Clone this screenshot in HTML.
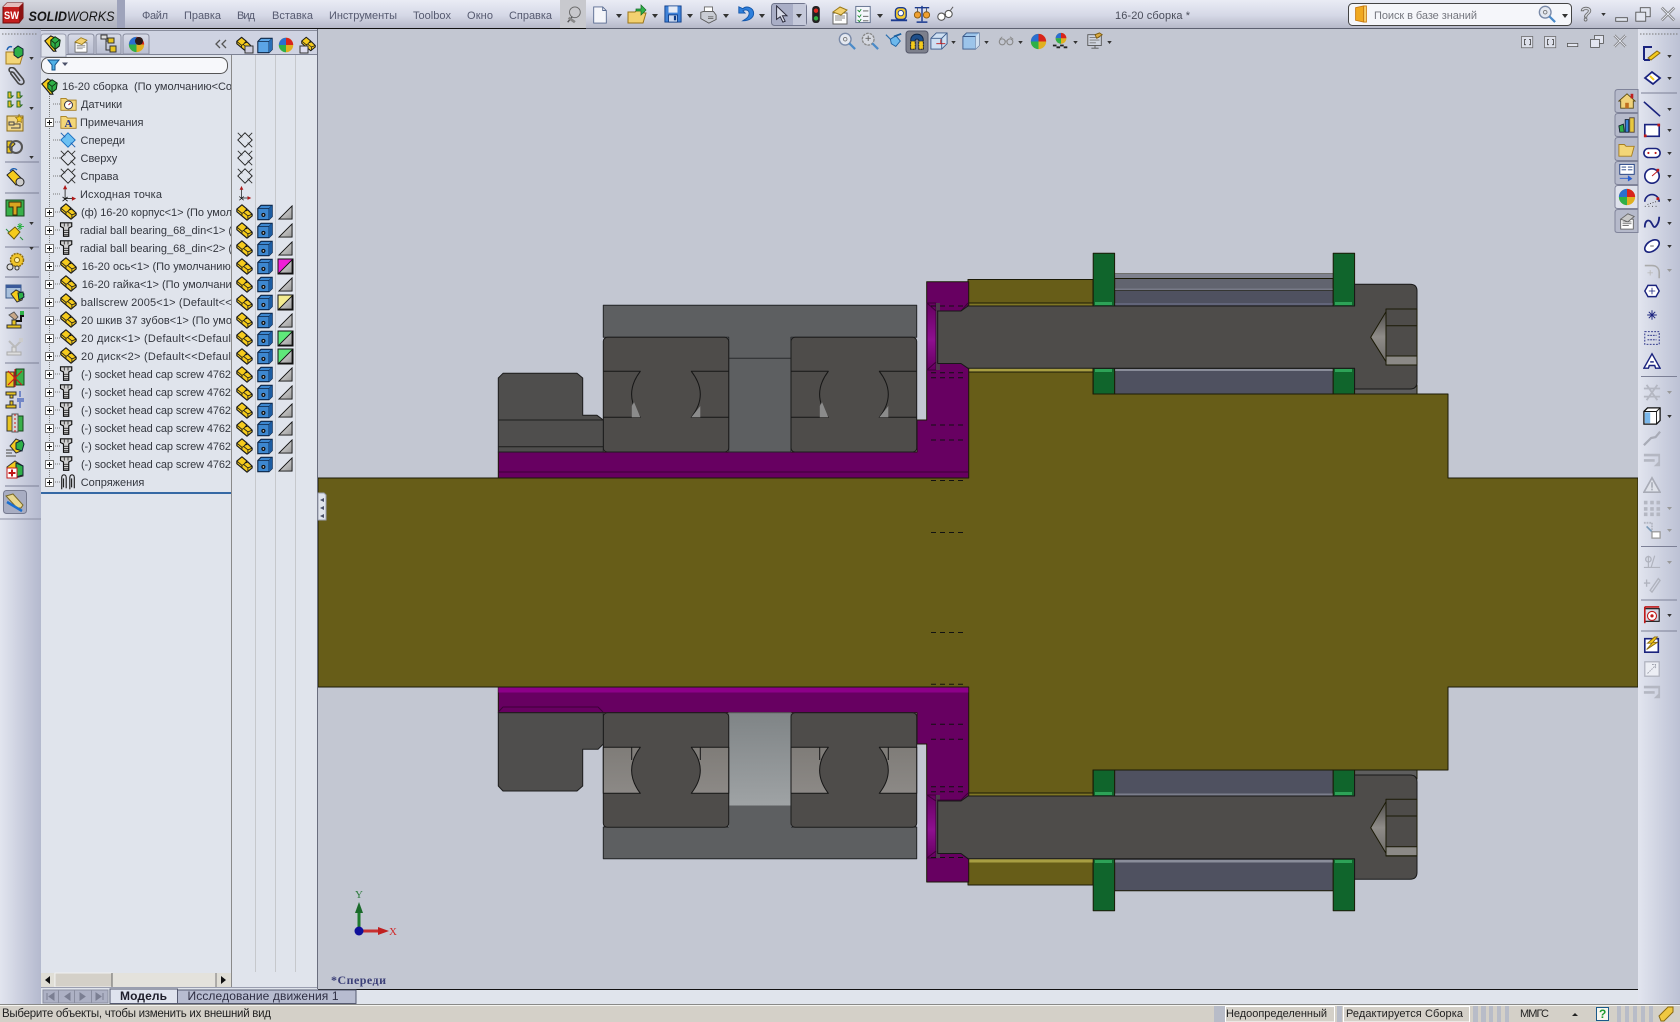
<!DOCTYPE html>
<html><head><meta charset="utf-8"><title>SOLIDWORKS</title>
<style>
html,body{margin:0;padding:0;background:#c3c7d2;width:1680px;height:1022px;overflow:hidden}
svg{display:block;position:absolute;left:0;top:0}
text{font-family:"Liberation Sans","Noto Sans CJK SC",sans-serif;font-size:11px;fill:#34373f}
.m{fill:#565a70}
.t{font-size:11px}
</style></head><body>
<svg width="1680" height="1022" viewBox="0 0 1680 1022" xmlns="http://www.w3.org/2000/svg">
<defs>
<linearGradient id="gTop" x1="0" y1="0" x2="0" y2="1"><stop offset="0" stop-color="#eaecf5"/><stop offset=".55" stop-color="#d5d8e6"/><stop offset="1" stop-color="#b6b9c9"/></linearGradient>
<linearGradient id="gLogo" x1="0" y1="0" x2="0" y2="1"><stop offset="0" stop-color="#d5d7df"/><stop offset="1" stop-color="#aeb1bd"/></linearGradient>
<linearGradient id="gL" x1="0" y1="0" x2="1" y2="0"><stop offset="0" stop-color="#e2e5ef"/><stop offset="1" stop-color="#b4b9ce"/></linearGradient>
<linearGradient id="gR" x1="0" y1="0" x2="1" y2="0"><stop offset="0" stop-color="#e2e5ef"/><stop offset="1" stop-color="#bcc1d4"/></linearGradient>
<linearGradient id="gSide" x1="0" y1="0" x2="0" y2="1"><stop offset="0" stop-color="#7f7c78"/><stop offset="1" stop-color="#8c8986"/></linearGradient>
<linearGradient id="gGap" x1="0" y1="0" x2="0" y2="1"><stop offset="0" stop-color="#7f8486"/><stop offset="1" stop-color="#9fa3a5"/></linearGradient>
<linearGradient id="gCone" x1="0" y1="0" x2="0" y2="1"><stop offset="0" stop-color="#4e4c4a"/><stop offset=".5" stop-color="#8f8c88"/><stop offset="1" stop-color="#6f6d6a"/></linearGradient>
<linearGradient id="gPur" x1="0" y1="0" x2="0" y2="1"><stop offset="0" stop-color="#660060"/><stop offset=".55" stop-color="#8e1090"/><stop offset="1" stop-color="#660060"/></linearGradient>
<linearGradient id="gTri" x1="0" y1="0" x2="1" y2="1"><stop offset="0" stop-color="#e8e8e8"/><stop offset="1" stop-color="#9a9a9a"/></linearGradient>
<linearGradient id="gTab" x1="0" y1="0" x2="0" y2="1"><stop offset="0" stop-color="#d8dbe8"/><stop offset="1" stop-color="#b9bed1"/></linearGradient>
<clipPath id="cTree"><rect x="41" y="76" width="190" height="420"/></clipPath>

<symbol id="dd" viewBox="0 0 6 4"><path d="M0 0h6L3 4z" fill="#333"/></symbol>
<symbol id="part" viewBox="0 0 20 20"><path d="M1 6 7 1l6 5-2 2 3-1 5 5v2l-6 5L1 9z" fill="#f5cb1c" stroke="#1c1c1c" stroke-width="1.400" stroke-linejoin="round"/><path d="M1 6l6 5 2-1M7 11v3l6 5M13 6 9 10l5 4 5-2M14 14v4" fill="none" stroke="#1c1c1c"/></symbol>
<symbol id="screw" viewBox="0 0 20 20"><path d="M2 1h15v5l-4 2v11H6V8L2 6z" fill="#cfcfcf" stroke="#111" stroke-width="1.500"/><path d="M6 11h7M6 14h7M6 17h7M7 2v4M12 2v4" stroke="#111"/></symbol>
<symbol id="cube" viewBox="0 0 20 20"><path d="M1 5 5 1h14v14l-4 4H1z" fill="#3d87cf" stroke="#0c2444" stroke-width="1.400"/><path d="M1 5h14v14M15 5l4-4" fill="none" stroke="#0c2444"/><path d="M15 5l4-4v14l-4 4z" fill="#1c5da3"/><circle cx="8" cy="13" r="2.600" fill="#111"/><circle cx="8" cy="13" r="1" fill="#ddd"/></symbol>
<symbol id="cubeH" viewBox="0 0 20 20"><path d="M1 5 5 1h14v14l-4 4H1z" fill="#5ba5e6" stroke="#0c2444" stroke-width="1.300"/><path d="M1 5h14v14M15 5l4-4" fill="none" stroke="#0c2444"/><path d="M15 5l4-4v14l-4 4z" fill="#2a6fb6"/></symbol>
<symbol id="tri" viewBox="0 0 16 16"><path d="M1 15 15 1v14z" fill="url(#gTri)" stroke="#111"/></symbol>
<symbol id="plane" viewBox="0 0 20 20"><path d="M10 2 18 10 10 18 2 10z" fill="none" stroke="#222"/><path d="M2 2 7 7M13 13l5 5M18 2l-4 4" stroke="#333"/></symbol>
<symbol id="planeB" viewBox="0 0 20 20"><path d="M10 2 18 10 10 18 2 10z" fill="#6cc0f2" stroke="#1a6fc0"/><path d="M2 2 7 7M13 13l5 5" stroke="#1a5fb0"/></symbol>
<symbol id="orig" viewBox="0 0 20 20"><path d="M6 1v15h11" fill="none" stroke="#222"/><path d="M6 0 3.500 5h5zM19 16l-5-2.500v5z" fill="#b01818"/><path d="M3 14l6 5M9 14l-6 5" stroke="#111"/></symbol>
<symbol id="folder" viewBox="0 0 20 20"><path d="M1 4h6l2 2h10v12H1z" fill="#f3d678" stroke="#a57d20"/></symbol>
<symbol id="mates" viewBox="0 0 20 20"><path d="M3 18V5c0-4 5-4 5 0v12M5 16V6M12 18V5c0-4 5-4 5 0v12M14 16V6" fill="none" stroke="#222" stroke-width="1.300"/></symbol>
<symbol id="box" viewBox="0 0 9 9"><rect x=".5" y=".5" width="8" height="8" fill="#fff" stroke="#777"/><path d="M2 4.500h5M4.500 2v5" stroke="#111"/></symbol>
<symbol id="asm" viewBox="0 0 20 20"><path d="M1 7 8 1l4 2-2 8 4 8-3 0z" fill="#f5cb1c" stroke="#1c1c1c" stroke-width="1.300"/><path d="M8 6 13 2l6 4-1 7-5 4-5-5z" fill="#2eb048" stroke="#0f2d10" stroke-width="1.200"/><path d="M8 6l5 4 5-4M13 10v7" stroke="#0f2d10" fill="none"/></symbol>
<symbol id="ball" viewBox="0 0 20 20"><circle cx="10" cy="10" r="9" fill="#e0b020"/><path d="M10 1a9 9 0 0 0-9 9h9z" fill="#2a6fd0"/><path d="M10 1a9 9 0 0 1 9 9h-9z" fill="#d8241c"/><path d="M1 10a9 9 0 0 0 9 9V10z" fill="#2eb048"/></symbol>
<symbol id="aopen" viewBox="0 0 20 20"><path d="M1 7h7l2 2h8l-3 10H1z" fill="#f3d678" stroke="#a57d20"/><path d="M9 4l4-3 5 3v6l-5 3-4-3z" fill="#2eb048" stroke="#123"/><path d="M2 5c1-3 3-4 5-3" stroke="#1a5fb0" fill="none" stroke-width="1.400"/></symbol>
<symbol id="clip" viewBox="0 0 20 20"><path d="M5 5c-3-4 2-6 5-3l8 10c3 5-2 7-5 4L6 7c-1-2 1-3 3-1l6 8" fill="none" stroke="#444" stroke-width="1.600"/></symbol>
<symbol id="patt" viewBox="0 0 20 20"><path d="M3 2h3v4h2L6 8H3zM3 11h3v4h2l-2 2H3zM12 2h3v4h2l-2 2h-3zM12 11h3v4h2l-2 2h-3z" fill="#e8c420" stroke="#286a28"/></symbol>
<symbol id="fstar" viewBox="0 0 20 20"><rect x="2" y="3" width="16" height="15" fill="#efd58a" stroke="#8a6a18"/><path d="M4 9h5v3H4zM9 11h6v4H6" fill="none" stroke="#444"/><path d="M14 1l1 3 3 .5-2 2 .5 3-2.500-1.500L12 9.500l.5-3-2-2 3-.5z" fill="#f5cb1c" stroke="#8a6a18" stroke-width=".6"/></symbol>
<symbol id="rot" viewBox="0 0 20 20"><path d="M2 4h5l3 3-3 3H2zM2 10h5v6H2z" fill="#e8c420" stroke="#333"/><circle cx="11" cy="10" r="6" fill="none" stroke="#555" stroke-width="2"/></symbol>
<symbol id="gparts" viewBox="0 0 20 20"><path d="M2 8l6-5 9 9-1 5-5 1z" fill="#f5cb1c" stroke="#222"/><circle cx="15" cy="15" r="4" fill="#ccc" stroke="#222"/><path d="M5 4c2-3 5-3 7-1" stroke="#1a5fb0" fill="none" stroke-width="1.300"/></symbol>
<symbol id="ham" viewBox="0 0 20 20"><rect x="1" y="2" width="18" height="16" fill="#39b04a" stroke="#17451c"/><path d="M4 4h12v5h-4v8H8V9H4z" fill="#d9a520" stroke="#3a2a08"/></symbol>
<symbol id="exp" viewBox="0 0 20 20"><path d="M3 11l7-6 5 5-6 7z" fill="#f5cb1c" stroke="#6a5a10"/><path d="M15 1v7M12 4.500h7M13 2l4 5M17 2l-4 5" stroke="#2eb048"/><path d="M1 7l3 3M15 15l3 3" stroke="#2e9040"/></symbol>
<symbol id="gears" viewBox="0 0 20 20"><circle cx="12" cy="9" r="6.500" fill="#f0c52a" stroke="#8a6a10" stroke-width="1.500" stroke-dasharray="2 1"/><circle cx="12" cy="9" r="2.500" fill="#fff3b0" stroke="#8a6a10"/><circle cx="5" cy="16" r="3" fill="#ddd" stroke="#333"/><circle cx="12" cy="17" r="2" fill="#ddd" stroke="#333"/></symbol>
<symbol id="win" viewBox="0 0 20 20"><rect x="1" y="2" width="15" height="13" fill="#a8c0dc" stroke="#3a5a8a"/><rect x="1" y="2" width="15" height="3" fill="#3a5a9a"/><path d="M6 11l5-4 8 4-2 6-5 2z" fill="#f5cb1c" stroke="#333"/><path d="M13 10l5-1 1 5-5 3z" fill="#2eb048" stroke="#123"/></symbol>
<symbol id="move" viewBox="0 0 20 20"><path d="M2 15h14v3H2zM7 10h4v5H7z" fill="#e8c420" stroke="#333"/><path d="M4 5l5-3 4 5-3 3z" fill="#c8a888" stroke="#555"/><path d="M11 11h5V6h3" fill="none" stroke="#111" stroke-width="2"/><rect x="15" y="1" width="4" height="4" fill="#2eb048"/></symbol>
<symbol id="moveG" viewBox="0 0 20 20"><path d="M2 15h14v3H2zM7 10h4v5H7z" fill="#ddd" stroke="#aaa"/><path d="M4 4l6 6 6-6" fill="none" stroke="#bbb" stroke-width="2"/><rect x="14" y="1" width="4" height="4" fill="#ccc"/></symbol>
<symbol id="interf" viewBox="0 0 20 20"><rect x="1" y="4" width="8" height="15" fill="#e8c420" stroke="#333"/><rect x="11" y="1" width="8" height="16" fill="#39b04a" stroke="#17451c"/><path d="M3 3l14 14M17 3 3 17M10 1v18" stroke="#d01818" stroke-width="1.100"/></symbol>
<symbol id="align" viewBox="0 0 20 20"><path d="M1 2h10v3H1zM5 5h3v3H5zM1 15h10v3H1zM5 11h3v4H5z" fill="#e8c420" stroke="#333"/><path d="M15 1v6M12 9h7M15 18v-6M12 11h7" stroke="#1a3fb0"/></symbol>
<symbol id="holes" viewBox="0 0 20 20"><rect x="2" y="3" width="7" height="15" fill="#e8c420" stroke="#333"/><rect x="11" y="3" width="7" height="15" fill="#39b04a" stroke="#17451c"/><rect x="7" y="1" width="6" height="18" fill="#d6d6d6" stroke="#555"/><path d="M10 1v18" stroke="#d01818" stroke-dasharray="2 2"/></symbol>
<symbol id="lines" viewBox="0 0 20 20"><path d="M1 13h8M1 16h6M1 19h10" stroke="#666" stroke-width="1.300"/><path d="M5 9l6-7 7 3-2 9-5 2z" fill="#f5cb1c" stroke="#333"/><path d="M11 6l6-3 2 4-2 7-6-2z" fill="#2eb048" stroke="#123"/></symbol>
<symbol id="redc" viewBox="0 0 20 20"><path d="M2 8l8-6 8 5v10l-8 2-8-3z" fill="#f5cb1c" stroke="#333"/><path d="M11 4l7 3v9l-7 2z" fill="#2eb048" stroke="#123"/><rect x="2" y="9" width="10" height="10" fill="#fff" stroke="#c01818"/><path d="M7 10.500v7M3.500 14h7" stroke="#c01818" stroke-width="2"/></symbol>

<symbol id="doc" viewBox="0 0 20 20"><path d="M3 1h10l4 4v14H3z" fill="#f4f5fa" stroke="#586a90"/><path d="M13 1v4h4" fill="none" stroke="#586a90"/></symbol>
<symbol id="open" viewBox="0 0 20 20"><path d="M1 8h7l2-2h7v3h2l-3 10H1z" fill="#f3d170" stroke="#98741a"/><path d="M9 5h5V1l5 5-5 5V7H9z" fill="#2fb24a" stroke="#146a24" stroke-width=".7"/></symbol>
<symbol id="save" viewBox="0 0 20 20"><path d="M1 1h18v18H1z" fill="#3f82d8" stroke="#0d3c88"/><rect x="5" y="1.500" width="10" height="7" fill="#e6ebf5"/><rect x="5" y="11" width="10" height="8" fill="#cdd9ee" stroke="#0d3c88"/><rect x="11" y="12" width="2.500" height="5" fill="#0d3c88"/></symbol>
<symbol id="print" viewBox="0 0 20 20"><path d="M6 1h9v6H6z" fill="#fff" stroke="#666"/><path d="M2 7 5 6h11l3 4v5l-8 4-9-5z" fill="#c9ccd4" stroke="#555"/><path d="M10 12h6M10 14h6" stroke="#666"/></symbol>
<symbol id="undo" viewBox="0 0 20 20"><path d="M2 2v7h7l-2.500-2.500c3-2 7-1 7 3 0 3-2 5-7 8 8 0 12-4 12-8 0-7-8-9-12-5.500z" fill="#2e7fdc" stroke="#1457aa"/></symbol>
<symbol id="cursor" viewBox="0 0 20 20"><path d="M4 1v15l4-3 3 6 2.500-1-3-6h5z" fill="#d8dbe8" stroke="#2a2a3a" stroke-width="1.100"/></symbol>
<symbol id="traffic" viewBox="0 0 20 20"><rect x="6" y="1" width="8" height="18" rx="3.500" fill="#222"/><circle cx="10" cy="6" r="2.300" fill="#e02a20"/><circle cx="10" cy="14" r="2.300" fill="#30b040"/></symbol>
<symbol id="opts" viewBox="0 0 20 20"><rect x="3" y="8" width="14" height="11" fill="#fff" stroke="#666"/><path d="M5 11h10M5 13h10M5 15h7" stroke="#888"/><path d="M3 7l7-5 7 3-6 5z" fill="#f3d170" stroke="#9a7a1a"/></symbol>
<symbol id="list" viewBox="0 0 20 20"><rect x="2" y="1" width="16" height="18" fill="#f4f6fb" stroke="#5a6a88"/><path d="M4 5l2 2 2-3M4 11l2 2 2-3M4 16l2 2 2-3" fill="none" stroke="#1a8a30"/><path d="M10 6h6M10 12h6M10 17h6" stroke="#555"/></symbol>
<symbol id="tape" viewBox="0 0 20 20"><path d="M1 17h18" stroke="#1a3a90" stroke-width="2"/><rect x="6" y="3" width="12" height="13" rx="4" fill="#f3cb30" stroke="#1a3a90" stroke-width="1.500"/><circle cx="12" cy="9" r="3" fill="#fff" stroke="#1a3a90"/></symbol>
<symbol id="scale" viewBox="0 0 20 20"><path d="M2 3h16M10 1v17M4 19h12" stroke="#1a3a90" stroke-width="1.600"/><circle cx="5" cy="11" r="3.500" fill="#f0a030" stroke="#8a5a10"/><circle cx="15" cy="11" r="3.500" fill="#f0a030" stroke="#8a5a10"/><path d="M5 3v5M15 3v5" stroke="#555"/></symbol>
<symbol id="glass" viewBox="0 0 20 20"><circle cx="6" cy="13" r="4" fill="#fff" stroke="#555" stroke-width="1.200"/><circle cx="14" cy="10" r="4" fill="#fff" stroke="#555" stroke-width="1.200"/><path d="M10 11l1-1M16 6l3-4" stroke="#555"/></symbol>
<symbol id="pin" viewBox="0 0 20 20"><circle cx="11" cy="7" r="6" fill="#c8c8cc" stroke="#666"/><path d="M8 12l-5 6" stroke="#555" stroke-width="1.500"/><path d="M4 13l7 5" stroke="#888" stroke-width="3"/></symbol>
<symbol id="mag" viewBox="0 0 20 20"><circle cx="8" cy="8" r="6.500" fill="#e4e8f0" stroke="#7a8aa8" stroke-width="1.500"/><path d="M12.500 12.500 19 19" stroke="#4a8ac8" stroke-width="2.500"/><circle cx="8" cy="8" r="2" fill="none" stroke="#777"/></symbol>
<symbol id="magD" viewBox="0 0 20 20"><circle cx="8" cy="8" r="6.500" fill="#d5d8e0" stroke="#888" stroke-width="1.500" stroke-dasharray="3 1"/><path d="M12.500 12.500 19 19" stroke="#4a8ac8" stroke-width="2.500"/><path d="M8 4v6M5 7h6" stroke="#666"/></symbol>
<symbol id="prev" viewBox="0 0 20 20"><path d="M1 3l8 8" stroke="#2a6fb0" stroke-width="1.300"/><path d="M6 8l6-4 5 6-5 6-5-3z" fill="#6cb8ec" stroke="#1a5fa0"/><path d="M10 5 18 2" stroke="#1a5fa0" stroke-width="2"/></symbol>
<symbol id="sect" viewBox="0 0 20 20"><path d="M3 18V8c0-9 14-9 14 0v10h-5V9c0-3-4-3-4 0v9z" fill="#1f4f8a" stroke="#0c2444"/><path d="M3 18V9h5v9zM12 18V9h5v9z" fill="#f5cb1c" stroke="#222" stroke-dasharray="2 1"/></symbol>
<symbol id="vor" viewBox="0 0 20 20"><path d="M1 7l6-6h12v12l-6 6H1z" fill="#cfe0f2" stroke="#3a5a8a"/><path d="M1 7h12v12M13 7l6-6" fill="none" stroke="#3a5a8a"/><path d="M7 13h10M12 8v5" stroke="#c01818"/></symbol>
<symbol id="disp" viewBox="0 0 20 20"><path d="M1 5l4-4h14v14l-4 4H1z" fill="#9cc4ea" stroke="#3a5a8a"/><path d="M1 5h14v14" fill="none" stroke="#3a5a8a"/><path d="M15 5l4-4v14l-4 4z" fill="#cfdff0"/></symbol>
<symbol id="eyes" viewBox="0 0 20 20"><circle cx="5" cy="11" r="3.500" fill="none" stroke="#888" stroke-width="1.300"/><circle cx="14" cy="11" r="3.500" fill="none" stroke="#888" stroke-width="1.300"/><path d="M8 10l3 0M5 5l-3 3M14 5l4 3" stroke="#888"/></symbol>
<symbol id="scene" viewBox="0 0 20 20"><circle cx="10" cy="7" r="6" fill="#e0b020"/><path d="M10 1a6 6 0 0 0-6 6h6z" fill="#2a6fd0"/><path d="M10 1a6 6 0 0 1 6 6h-6z" fill="#d8241c"/><path d="M4 7a6 6 0 0 0 6 6V7z" fill="#2eb048"/><path d="M1 14h4v2H1zM5 16h4v2H5zM9 14h4v2H9zM13 16h4v2h-4z" fill="#222"/></symbol>
<symbol id="photo" viewBox="0 0 20 20"><rect x="2" y="3" width="15" height="12" fill="#cfd4de" stroke="#555"/><path d="M4 6h11M4 9h11M4 12h7" stroke="#777"/><path d="M10 3l5-2 3 2-6 4z" fill="#d9a940" stroke="#7a5a10"/><path d="M6 18h8M10 15v3" stroke="#555"/></symbol>
<symbol id="book" viewBox="0 0 20 20"><path d="M4 3 13 1v18l-9-2z" fill="#f0a820" stroke="#c87a10"/><path d="M13 1h3v18h-3z" fill="#fbd36a" stroke="#c87a10"/></symbol>
<symbol id="helpq" viewBox="0 0 20 20"><path d="M4 6c0-6 12-6 12 0 0 4-5 4-5 8h-3c0-5 5-5 5-8 0-2-6-2-6 0z" fill="#d5d8e0" stroke="#666"/><circle cx="9.500" cy="17" r="1.800" fill="#d5d8e0" stroke="#666"/></symbol>
<symbol id="rest" viewBox="0 0 20 20"><rect x="7" y="3" width="11" height="10" fill="#e2e5ef" stroke="#555"/><rect x="2" y="8" width="11" height="10" fill="#e2e5ef" stroke="#555"/></symbol>
<symbol id="close" viewBox="0 0 20 20"><path d="M3 3l14 14M17 3 3 17" stroke="#777" stroke-width="3"/><path d="M3 3l14 14M17 3 3 17" stroke="#e2e5ef" stroke-width="1.200"/></symbol>
<symbol id="mini" viewBox="0 0 20 20"><rect x="3" y="13" width="13" height="4" fill="#e2e5ef" stroke="#555"/></symbol>
<symbol id="tile" viewBox="0 0 20 20"><rect x="2" y="2" width="15" height="15" fill="#dde0ea" stroke="#666"/><path d="M8 6H6v7h2M12 6h2v7h-2" fill="none" stroke="#333"/></symbol>

<symbol id="home" viewBox="0 0 20 20"><path d="M1 10 10 2l9 8-2 0v8H3v-8z" fill="#f0d27a" stroke="#5a4a10"/><rect x="8" y="12" width="4" height="6" fill="#c07020"/><rect x="14" y="2" width="3" height="5" fill="#c02020"/></symbol>
<symbol id="lib" viewBox="0 0 20 20"><path d="M1 11l5-2 1 9H2z" fill="#2eb048" stroke="#123"/><rect x="8" y="4" width="4" height="14" fill="#3a82d8" stroke="#123"/><rect x="13" y="2" width="5" height="16" fill="#e8c840" stroke="#543"/></symbol>
<symbol id="fold" viewBox="0 0 20 20"><path d="M1 5h6l2 2h9l-3 11H1z" fill="#f3d678" stroke="#a57d20"/></symbol>
<symbol id="vpal" viewBox="0 0 20 20"><rect x="2" y="1" width="16" height="11" fill="#fff" stroke="#1a3a80"/><path d="M4 4h5M4 7h5M11 4h5M11 7h5" stroke="#1a3a80"/><path d="M2 16h9v-3l5 4-5 3v-3H2z" fill="#2a5fd0"/></symbol>
<symbol id="cust" viewBox="0 0 20 20"><rect x="3" y="8" width="14" height="11" fill="#fff" stroke="#666"/><path d="M5 11h10M5 13h10M5 15h7" stroke="#777"/><path d="M3 8l8-6 7 3-7 6z" fill="#c8c8c8" stroke="#666"/></symbol>

<symbol id="rLine" viewBox="0 0 20 20"><path d="M1 2l18 16" stroke="#1a237e" stroke-width="1.800"/></symbol>
<symbol id="rRect" viewBox="0 0 20 20"><rect x="2" y="4" width="16" height="13" fill="#fff" stroke="#1a237e" stroke-width="1.800"/><rect x="1" y="15" width="3" height="3" fill="#c01818"/><rect x="16" y="3" width="3" height="3" fill="#c01818"/></symbol>
<symbol id="rSlot" viewBox="0 0 20 20"><rect x="1" y="5" width="18" height="10" rx="5" fill="#fff" stroke="#1a237e" stroke-width="1.800"/><circle cx="6" cy="10" r="1.200" fill="#c01818"/><circle cx="14" cy="10" r="1.200" fill="#c01818"/></symbol>
<symbol id="rCirc" viewBox="0 0 20 20"><circle cx="10" cy="10" r="8" fill="#fff" stroke="#1a237e" stroke-width="1.800"/><path d="M10 10l7-6" stroke="#c01818"/><rect x="15" y="2" width="3" height="3" fill="#c01818"/></symbol>
<symbol id="rArc" viewBox="0 0 20 20"><path d="M2 12A8 8 0 0 1 18 12" fill="none" stroke="#1a237e" stroke-width="1.800"/><path d="M5 15l12-4" stroke="#333" stroke-dasharray="1 2"/><path d="M2 17h16" stroke="#333" stroke-dasharray="1 3"/><rect x="15" y="7" width="3" height="3" fill="#c01818"/></symbol>
<symbol id="rSpl" viewBox="0 0 20 20"><path d="M2 15c0-7 3-9 6-7 3 3 3 8 6 6 2-2 4-6 4-11" fill="none" stroke="#1a237e" stroke-width="2"/></symbol>
<symbol id="rEll" viewBox="0 0 20 20"><ellipse cx="10" cy="10" rx="9" ry="5.500" transform="rotate(-35 10 10)" fill="#fff" stroke="#1a237e" stroke-width="1.800"/><path d="M8 10l4 0" stroke="#555"/></symbol>
<symbol id="rFil" viewBox="0 0 20 20"><path d="M2 4h8c5 0 8 3 8 8v6" fill="none" stroke="#aaa" stroke-width="1.800"/><path d="M5 12h6M8 9v6" stroke="#bbb"/></symbol>
<symbol id="rHex" viewBox="0 0 20 20"><path d="M5 3h10l4 7-4 7H5l-4-7z" fill="#fff" stroke="#1a237e" stroke-width="1.800"/><path d="M6 10h8M10 6v8" stroke="#1a237e"/></symbol>
<symbol id="rPt" viewBox="0 0 20 20"><path d="M10 4v12M4 10h12M6 6l8 8M14 6l-8 8" stroke="#1a237e" stroke-width="1.200"/></symbol>
<symbol id="rCon" viewBox="0 0 20 20"><path d="M2 3h16v14H2z" fill="none" stroke="#1a237e" stroke-dasharray="2 1.500"/><path d="M5 7h10M5 12h10" stroke="#1a237e" stroke-dasharray="2 1"/></symbol>
<symbol id="rTxt" viewBox="0 0 20 20"><path d="M1 18 10 2l9 16h-5l-1-3H7l-1 3z" fill="#fff" stroke="#1a237e" stroke-width="1.600"/><path d="M8 11h4" stroke="#1a237e" stroke-width="1.600"/></symbol>
<symbol id="rTrim" viewBox="0 0 20 20"><path d="M1 5h18M1 14h18M4 1l12 17M16 1 4 18" stroke="#b4b7c2" stroke-width="2"/></symbol>
<symbol id="rBox" viewBox="0 0 20 20"><path d="M1 5l4-4h14v14l-4 4H1z" fill="#fff" stroke="#111" stroke-width="1.400"/><path d="M1 5h14v14M15 5l4-4" fill="none" stroke="#111"/><rect x="2" y="6" width="6" height="12" fill="#7ab8ec"/></symbol>
<symbol id="rCurve" viewBox="0 0 20 20"><path d="M1 18 9 10l5-1 5-6" fill="none" stroke="#a8abb6" stroke-width="2.500"/></symbol>
<symbol id="rOff" viewBox="0 0 20 20"><path d="M1 3h18v14H12l5-5V6H1zM1 9h12v3H1z" fill="#b4b7c2"/></symbol>
<symbol id="rWarn" viewBox="0 0 20 20"><path d="M10 2 19 18H1z" fill="#dfe2ea" stroke="#a8abb6" stroke-width="1.800"/><path d="M10 7v6M10 14v2" stroke="#a8abb6" stroke-width="1.800"/></symbol>
<symbol id="rGrid" viewBox="0 0 20 20"><path d="M1 2h4v4H1zM8 2h4v4H8zM15 2h4v4h-4zM1 9h4v4H1zM8 9h4v4H8zM15 9h4v4h-4zM1 15h4v4H1zM8 15h4v4H8zM15 15h4v4h-4z" fill="#b4b7c2"/></symbol>
<symbol id="rMove" viewBox="0 0 20 20"><path d="M1 2h9v8" fill="none" stroke="#b4b7c2" stroke-width="2" stroke-dasharray="2 1"/><path d="M4 6l7 7" stroke="#7a9ab8" stroke-width="1.800"/><rect x="10" y="12" width="9" height="7" fill="#fff" stroke="#999" stroke-width="1.400"/></symbol>
<symbol id="rDim" viewBox="0 0 20 20"><circle cx="6" cy="7" r="3" fill="none" stroke="#b0b3be" stroke-width="1.500"/><path d="M1 16h18M6 3v13M13 3 9 16" stroke="#b0b3be" stroke-width="1.300"/></symbol>
<symbol id="rRel" viewBox="0 0 20 20"><path d="M1 9h7M4 5v8M8 17 17 4l2 2-9 13z" fill="none" stroke="#b0b3be" stroke-width="1.500"/></symbol>
<symbol id="rTgt" viewBox="0 0 20 20"><path d="M2 1v18M2 3h16v14H2" fill="none" stroke="#111" stroke-width="1.200"/><path d="M2 1v18M2 1h16" stroke="#c01818" stroke-width="1.800" fill="none"/><circle cx="10" cy="11" r="5" fill="#fff" stroke="#c01818" stroke-width="1.200"/><circle cx="10" cy="11" r="1.800" fill="#c01818"/></symbol>
<symbol id="rBolt" viewBox="0 0 20 20"><rect x="2" y="3" width="15" height="15" fill="#fff" stroke="#1a237e" stroke-width="1.800"/><path d="M13 1 5 8h5l-6 7 12-8h-5l5-6z" fill="#f5cb1c" stroke="#8a6a10"/></symbol>
<symbol id="rScl" viewBox="0 0 20 20"><rect x="2" y="2" width="16" height="16" fill="#eceef4" stroke="#b0b3be" stroke-width="1.400"/><path d="M5 15 14 6M10 5h4v4" fill="none" stroke="#a0a3ae" stroke-dasharray="2 1"/></symbol>
</defs>

<!-- Title bar -->
<rect x="0" y="0" width="1680" height="28" fill="url(#gTop)"/>
<rect x="0" y="0" width="125" height="28" fill="url(#gLogo)"/>
<rect x="117" y="0" width="8" height="28" fill="#9ea3bb"/>
<rect x="560" y="0" width="26" height="28" fill="#c8c9ce"/>
<rect x="0" y="28" width="586" height="1.200" fill="#111"/>
<rect x="586" y="28" width="1094" height="1.200" fill="#5c6070"/>
<!-- SW logo -->
<path d="M3 7 7 3h16v15l-4 5H3z" fill="#c21d1d" stroke="#6e0c0c"/>
<path d="M3 7 7 3h16l-4 4z" fill="#e4bcbc"/>
<path d="M19 7l4-4v15l-4 5z" fill="#8c1212"/>
<text x="4" y="19" textLength="15" lengthAdjust="spacingAndGlyphs" style="font-weight:700;font-size:11px;fill:#fff">SW</text>
<text x="28.500" y="21" textLength="86" lengthAdjust="spacingAndGlyphs" style="font-style:italic;font-size:14px;font-weight:700;fill:#161616">SOLID<tspan style="font-weight:400">WORKS</tspan></text>
<!-- Menu -->
<text class="m" x="142" y="19" textLength="26">Файл</text>
<text class="m" x="184" y="19" textLength="37">Правка</text>
<text class="m" x="237" y="19" textLength="18">Вид</text>
<text class="m" x="272" y="19" textLength="41">Вставка</text>
<text class="m" x="329" y="19" textLength="68">Инструменты</text>
<text class="m" x="413" y="19" textLength="38">Toolbox</text>
<text class="m" x="467" y="19" textLength="26">Окно</text>
<text class="m" x="509" y="19" textLength="43">Справка</text>
<use href="#pin" x="565" y="6" width="18" height="18"/>
<!-- Top toolbar -->
<use href="#doc" x="591" y="5" width="18" height="20"/><use href="#dd" x="616" y="14" width="6" height="4"/>
<use href="#open" x="627" y="4" width="20" height="20"/><use href="#dd" x="652" y="14" width="6" height="4"/>
<use href="#save" x="664" y="5" width="18" height="18"/><use href="#dd" x="687" y="14" width="6" height="4"/>
<use href="#print" x="699" y="5" width="18" height="20"/><use href="#dd" x="723" y="14" width="6" height="4"/>
<use href="#undo" x="737" y="5" width="18" height="18"/><use href="#dd" x="759" y="14" width="6" height="4"/>
<rect x="771.500" y="3.500" width="35" height="22" rx="3" fill="#a9aec6" stroke="#70758c"/><rect x="793" y="4" width="13" height="21" fill="#c5c9da"/>
<use href="#cursor" x="773" y="5" width="18" height="18"/><use href="#dd" x="796" y="14" width="6" height="4"/>
<use href="#traffic" x="806" y="5" width="20" height="19"/>
<use href="#opts" x="830" y="5" width="20" height="20"/>
<use href="#list" x="854" y="5" width="18" height="19"/><use href="#dd" x="877" y="14" width="6" height="4"/>
<use href="#tape" x="890" y="5" width="18" height="18"/>
<use href="#scale" x="913" y="5" width="18" height="18"/>
<use href="#glass" x="936" y="5" width="18" height="18"/>
<text x="1115" y="19" textLength="75" style="fill:#4a4d5a">16-20 сборка *</text>
<!-- Search -->
<rect x="1348.500" y="3.500" width="223" height="22" rx="4" fill="#f5f6fa" stroke="#444"/>
<use href="#book" x="1352" y="5" width="18" height="18"/>
<text x="1374" y="19" textLength="103" style="fill:#74767e">Поиск в базе знаний</text>
<use href="#mag" x="1538" y="5" width="18" height="18"/><use href="#dd" x="1562" y="14" width="6" height="4"/>
<use href="#helpq" x="1578" y="5" width="16" height="18"/><use href="#dd" x="1601" y="13" width="5" height="3"/>
<use href="#mini" x="1613" y="6" width="18" height="18"/><use href="#rest" x="1634" y="5" width="18" height="18"/><use href="#close" x="1659" y="5" width="18" height="18"/>

<!-- Viewport -->
<rect x="318" y="29" width="1320" height="960" fill="#c3c7d2"/>
<!-- CAD: olive -->
<g stroke="#1b1a06" stroke-width="1" stroke-linejoin="round">
<path d="M318 478H968V372H1093V394H1448V478H1638V687H1448V770H1093V793H968V687H318z" fill="#675d18"/>
<rect x="968" y="279.500" width="125" height="23.500" fill="#675d18"/>
<rect x="968" y="303" width="125" height="3" fill="#7f7624"/>
<rect x="968" y="368" width="125" height="4" fill="#a89e42"/>
<rect x="968" y="793" width="125" height="3" fill="#7f7624"/>
<rect x="968" y="858.500" width="125" height="26.500" fill="#675d18"/>
<rect x="968" y="859" width="125" height="3.500" fill="#a89e42" stroke="none"/>

<!-- purple -->
<path d="M498.300 452H917V420H926.700V281.700H968.700V478H498.300z" fill="#670061"/>
<path d="M498.300 472H968.700" stroke="#3d0038" fill="none"/>
<path d="M498.300 687H968.700V882H926.700V744H917V712.700H498.300z" fill="#670061"/>
<rect x="498.300" y="687.500" width="470" height="5" fill="#8d0089" stroke="none"/>
<path d="M498.300 712 503 707H598L603 712" fill="#670061" stroke="#3d0038"/>
<rect x="927" y="303" width="9" height="67" fill="url(#gPur)" stroke="#3d0038"/>
<rect x="927" y="795" width="9" height="63" fill="url(#gPur)" stroke="#3d0038"/>
<rect x="936" y="303" width="4" height="67" fill="#4e3a4c" stroke="none"/>
<rect x="936" y="795" width="4" height="63" fill="#4e3a4c" stroke="none"/>
<path d="M927 303 936 311M968 303 961 311H937M927 370l9-8M968 368l-7-6H937" fill="none" stroke="#3d0038"/>
<path d="M927 795l9 6M968 793l-7 7H937M927 858l9-7M968 859l-7-7H937" fill="none" stroke="#3d0038"/>

<!-- upper housing -->
<path d="M603.300 305.300H916.700V337.300H791V452H728.700V337.300H603.300z" fill="#5d5f61" stroke="#232527"/>
<path d="M728.700 358.300H791" stroke="#2a2c2e"/>
<!-- upper bearings -->
<g>
<rect x="603.300" y="337.300" width="125.400" height="114.700" rx="4" fill="#4e4c4a" stroke="#1b1b1b"/>
<path d="M603.300 371.300H640.300Q622.900 394.300 640.300 417.300H603.300M728.700 371.300H691.300Q709.300 394.300 691.300 417.300H728.700" fill="none" stroke="#161616"/>
<path d="M631.800 406 634 402 640.300 417.300H631.800zM700.300 406V417.300H691.300z" fill="#8b8b8b" stroke="none"/>
</g>
<g>
<rect x="791" y="337.300" width="125.700" height="114.700" rx="4" fill="#4e4c4a" stroke="#1b1b1b"/>
<path d="M791 371.300H828.300Q810.900 394.300 828.300 417.300H791M916.700 371.300H879.300Q897.300 394.300 879.300 417.300H916.700" fill="none" stroke="#161616"/>
<path d="M819.800 406 822 402 828.300 417.300H819.800zM888.300 406V417.300H879.300z" fill="#8b8b8b" stroke="none"/>
</g>
<!-- upper nut -->
<path d="M503 373.300H577L582.700 378V415.300H597L603.300 420V452H498.300V378z" fill="#4f4e4d" stroke="#1d1d1d"/>
<path d="M498.300 420H603M498.300 446.700H603" fill="none" stroke="#1d1d1d"/>

<!-- lower housing -->
<rect x="603.300" y="827" width="313.400" height="31.700" fill="#5d5f61" stroke="#232527"/>
<rect x="728.700" y="806" width="62.300" height="22" fill="#5d5f61" stroke="none"/>
<rect x="728.700" y="712.700" width="62.300" height="93.300" fill="url(#gGap)" stroke="#5d5f61"/>
<!-- lower bearings -->
<g>
<rect x="603.300" y="712.700" width="125.400" height="114.600" rx="4" fill="#4e4c4a" stroke="#1b1b1b"/>
<path d="M603.300 747.300H640.300Q622.900 770.300 640.300 793.300H603.300z" fill="url(#gSide)" stroke="#161616"/>
<path d="M728.700 747.300H691.300Q709.300 770.300 691.300 793.300H728.700z" fill="url(#gSide)" stroke="#161616"/>
<path d="M631.700 747.300V760M700.300 747.300V760" stroke="#161616"/>
</g>
<g>
<rect x="791" y="712.700" width="125.700" height="114.600" rx="4" fill="#4e4c4a" stroke="#1b1b1b"/>
<path d="M791 747.300H828.300Q810.900 770.300 828.300 793.300H791z" fill="url(#gSide)" stroke="#161616"/>
<path d="M916.700 747.300H879.300Q897.300 770.300 879.300 793.300H916.700z" fill="url(#gSide)" stroke="#161616"/>
<path d="M819.700 747.300V760M888.300 747.300V760" stroke="#161616"/>
</g>
<!-- lower nut -->
<path d="M498.300 712.700H603.300V744L598 749.300H582.700V786L577 791H503L498.300 786z" fill="#4f4e4d" stroke="#1d1d1d"/>

<!-- spacers upper -->
<rect x="1114.600" y="274" width="218.600" height="32" fill="#4f5160"/>
<rect x="1114.600" y="274" width="218.600" height="4.500" fill="#7e818d" stroke="none"/>
<rect x="1114.600" y="278.500" width="218.600" height="11.500" fill="#61646f"/>
<rect x="1114.600" y="288.500" width="218.600" height="1.500" fill="#777a87" stroke="none"/>
<rect x="1114.600" y="303" width="218.600" height="2" fill="#62657a" stroke="none"/>
<rect x="1114.600" y="368.300" width="218.600" height="25.700" fill="#4f5160"/>
<rect x="1114.600" y="369" width="218.600" height="2" fill="#8a8d9a" stroke="none"/>
<rect x="1114.600" y="770" width="218.600" height="26" fill="#4f5160"/>
<rect x="1114.600" y="793.500" width="218.600" height="2" fill="#7b7e8c" stroke="none"/>
<rect x="1114.600" y="858.700" width="218.600" height="32" fill="#4f5160"/>
<rect x="1114.600" y="860" width="218.600" height="2.500" fill="#8a8d9a" stroke="none"/>

<!-- green -->
<g fill="#10652c">
<rect x="1093.200" y="253.300" width="21.400" height="52.700"/>
<rect x="1333.200" y="253.300" width="21.400" height="52.700"/>
<rect x="1093.200" y="368.300" width="21.400" height="25.700"/>
<rect x="1333.200" y="368.300" width="21.400" height="25.700"/>
<rect x="1093.200" y="770" width="21.400" height="26"/>
<rect x="1333.200" y="770" width="21.400" height="26"/>
<rect x="1093.200" y="858.700" width="21.400" height="52"/>
<rect x="1333.200" y="858.700" width="21.400" height="52"/>
</g>
<g fill="#2da257" stroke="none">
<rect x="1095" y="369" width="17" height="3"/><rect x="1335" y="369" width="17" height="3"/>
<rect x="1095" y="302" width="17" height="3"/><rect x="1335" y="302" width="17" height="3"/>
<rect x="1095" y="860" width="17" height="3"/><rect x="1335" y="860" width="17" height="3"/>
<rect x="1095" y="792" width="17" height="3"/><rect x="1335" y="792" width="17" height="3"/>
</g>

<!-- screws -->
<rect x="1354.600" y="385" width="62.400" height="9" fill="#5e5e5e"/>
<rect x="1354.600" y="770" width="62.400" height="9" fill="#5e5e5e"/>
<path d="M937.700 311H961L968 306H1354.600V284.300H1410Q1417 284.300 1417 291V382Q1417 389 1410 389H1354.600V368.300H968L961 363.500H937.700z" fill="#4e4c4a" stroke="#181818"/>
<path d="M937.700 801H961L968 796H1354.600V775H1410Q1417 775 1417 782V872.300Q1417 879.300 1410 879.300H1354.600V858.700H968L961 853.500H937.700z" fill="#4e4c4a" stroke="#181818"/>
<path d="M1386 311.700 1370.700 337.300 1386 361.700z" fill="url(#gCone)"/>
<rect x="1386" y="309" width="31" height="56" fill="#4e4c4a"/>
<rect x="1386" y="356" width="31" height="9" fill="#8b8986"/>
<path d="M1386 325.700H1417" fill="none"/>
<path d="M1386 801.700 1370.700 827.700 1386 853.300z" fill="url(#gCone)"/>
<rect x="1386" y="799.300" width="31" height="56.700" fill="#4e4c4a"/>
<rect x="1386" y="846.700" width="31" height="9" fill="#8b8986"/>
<path d="M1386 816H1417" fill="none"/>
</g>

<!-- dashes -->
<g stroke="#111" stroke-width="1" stroke-dasharray="5 4" fill="none">
<path d="M931 306H968M931 372.700H967M931 377.700H967M931 425H967M931 440H967M931 480.500H967M931 532.500H967M931 632.500H967M931 684.300H967M931 724.300H967M931 739.300H967M931 786.700H967M931 791.700H967M931 857.500H967"/>
</g>

<!-- View toolbar -->
<use href="#mag" x="838" y="32" width="18" height="18"/>
<use href="#magD" x="861" y="32" width="18" height="18"/>
<use href="#prev" x="885" y="32" width="18" height="18"/>
<rect x="906" y="31" width="22" height="22" rx="3" fill="#7d808c" stroke="#55586a"/>
<use href="#sect" x="908" y="33" width="18" height="18"/>
<use href="#vor" x="930" y="32" width="18" height="18"/><use href="#dd" x="951" y="41" width="5" height="3"/>
<use href="#disp" x="962" y="32" width="18" height="18"/><use href="#dd" x="984" y="41" width="5" height="3"/>
<use href="#eyes" x="998" y="32" width="17" height="18"/><use href="#dd" x="1018" y="41" width="5" height="3"/>
<use href="#ball" x="1030" y="33" width="17" height="17"/>
<use href="#scene" x="1052" y="32" width="18" height="18"/><use href="#dd" x="1073" y="41" width="5" height="3"/>
<use href="#photo" x="1086" y="32" width="18" height="18"/><use href="#dd" x="1107" y="41" width="5" height="3"/>
<use href="#tile" x="1520" y="35" width="15" height="15"/><use href="#tile" x="1543" y="35" width="15" height="15"/>
<use href="#mini" x="1565" y="33" width="16" height="16"/><use href="#rest" x="1589" y="33" width="16" height="16"/><use href="#close" x="1612" y="33" width="16" height="16"/>

<!-- Triad -->
<path d="M359 931V912" stroke="#1e7a2e" stroke-width="3"/><path d="M359 902l-4 11h8z" fill="#1a6a2a"/>
<path d="M360 931h20" stroke="#c83030" stroke-width="3"/><path d="M389 931l-11-4v8z" fill="#c02020"/>
<circle cx="359" cy="931" r="4.500" fill="#10109a"/>
<text x="355" y="898" style="font-family:'Liberation Serif',serif;font-size:11px;fill:#2c7a3c">Y</text>
<text x="389" y="935" style="font-family:'Liberation Serif',serif;font-size:11px;fill:#d02828">X</text>
<text x="331" y="984" textLength="55" style="font-family:'Liberation Serif',serif;font-weight:700;font-size:12px;fill:#3c4078">*Спереди</text>

<!-- Left toolbar -->
<rect x="0" y="29" width="41" height="975" fill="url(#gL)"/>
<path d="M2 34H37" stroke="#777" stroke-dasharray="1.500 1.500"/>
<g stroke="#7c8096"><path d="M5 162H39M5 193H39M5 247H39M5 277H39M5 308H39M5 363H39M5 486H39"/></g>
<path d="M0 519H41" stroke="#8c90a4"/>
<use href="#aopen" x="5" y="45" width="20" height="20"/><use href="#dd" x="29" y="57" width="5" height="3"/>
<use href="#clip" x="5" y="67" width="20" height="20"/>
<use href="#patt" x="5" y="90" width="20" height="20"/><use href="#dd" x="29" y="107" width="5" height="3"/>
<use href="#fstar" x="5" y="113" width="20" height="20"/>
<use href="#rot" x="5" y="137" width="20" height="20"/><use href="#dd" x="29" y="156" width="5" height="3"/>
<use href="#gparts" x="5" y="167" width="20" height="20"/>
<use href="#ham" x="5" y="198" width="20" height="20"/><use href="#dd" x="29" y="222" width="5" height="3"/>
<use href="#exp" x="5" y="222" width="20" height="20"/><use href="#dd" x="29" y="247" width="5" height="3"/>
<use href="#gears" x="5" y="251" width="20" height="20"/>
<use href="#win" x="5" y="283" width="20" height="20"/>
<use href="#move" x="5" y="310" width="20" height="20"/>
<use href="#moveG" x="5" y="337" width="20" height="20"/>
<use href="#interf" x="5" y="368" width="20" height="20"/>
<use href="#align" x="5" y="390" width="20" height="20"/>
<use href="#holes" x="5" y="413" width="20" height="20"/>
<use href="#lines" x="5" y="437" width="20" height="20"/>
<use href="#redc" x="5" y="459" width="20" height="20"/>
<rect x="3.500" y="490.500" width="23" height="23" rx="3" fill="#a8adc2" stroke="#777b90"/>
<path d="M6 496l7-2 10 11-2 3-4 0z" fill="#e8d890" stroke="#7a6a28"/><path d="M7 502 22 511" stroke="#1a6fd0" stroke-width="2.500"/>

<!-- Feature tree pane -->
<rect x="41" y="29" width="277" height="960" fill="#e0e4ec"/>
<rect x="41" y="29" width="277" height="25" fill="#cfd3e2"/>
<path d="M41 30.500H317" stroke="#8a8e9e"/>
<path d="M41 54.500H318" stroke="#7d8294"/>
<path d="M231.500 55V987" stroke="#8a8a8a"/>
<path d="M255.500 55V972M275.500 55V972M295.500 55V972" stroke="#c6c8cc"/>
<path d="M317.500 29V989" stroke="#6a6e7e"/>
<!-- tabs -->
<path d="M41 54V37q0-3 3-3h19q3 0 3 3v20H41z" fill="#e0e4ec" stroke="#9a9eb0"/>
<path d="M68 54V37q0-3 3-3h20q3 0 3 3v17z" fill="url(#gTab)" stroke="#8a8ea0"/>
<path d="M96 54V37q0-3 3-3h19q3 0 3 3v17z" fill="url(#gTab)" stroke="#8a8ea0"/>
<path d="M123 54V37q0-3 3-3h20q3 0 3 3v17z" fill="url(#gTab)" stroke="#8a8ea0"/>
<use href="#asm" x="44" y="35" width="17" height="17"/>
<use href="#opts" x="72" y="36" width="18" height="17"/>
<path d="M102 36h4v14h4M106 41h4" fill="none" stroke="#333"/><rect x="108" y="38" width="6" height="5" fill="#e8c420" stroke="#333"/><rect x="110" y="46" width="6" height="6" fill="#e8c420" stroke="#333"/><rect x="101" y="35" width="6" height="4" fill="#ddd" stroke="#333"/>
<use href="#ball" x="128" y="36" width="17" height="17"/><circle cx="139" cy="41" r="4" fill="#2a1a1a"/>
<path d="M220 40l-4 4 4 4M226 40l-4 4 4 4" fill="none" stroke="#555" stroke-width="1.300"/>
<use href="#part" x="236" y="36" width="16" height="17"/><rect x="245" y="46" width="8" height="7" fill="#ccd" stroke="#333"/>
<use href="#cubeH" x="257" y="37" width="16" height="17"/>
<use href="#ball" x="278" y="37" width="16" height="16"/>
<use href="#part" x="301" y="36" width="15" height="16"/><rect x="300" y="46" width="8" height="7" fill="#dde" stroke="#333"/>
<!-- filter -->
<rect x="41.500" y="57.500" width="186" height="16" rx="7" fill="#f7f8fb" stroke="#555"/>
<path d="M48 60h11l-4 5v5h-3v-5z" fill="#4fb0e6" stroke="#12508a"/><path d="M62 62.500h6l-3 3.500z" fill="#4a5068"/>

<!-- tree lines -->
<path d="M49.500 94V482M53 104h7M53 122h7M53 140h7M53 158h7M53 176h7M53 194h7M53 212h7M53 230h7M53 248h7M53 266h7M53 284h7M53 302h7M53 320h7M53 338h7M53 356h7M53 374h7M53 392h7M53 410h7M53 428h7M53 446h7M53 464h7M53 482h7" stroke="#777" stroke-dasharray="1 1"/>
<!-- expanders -->
<use href="#box" x="45" y="118" width="9" height="9"/>
<use href="#box" x="45" y="208" width="9" height="9"/><use href="#box" x="45" y="226" width="9" height="9"/><use href="#box" x="45" y="244" width="9" height="9"/><use href="#box" x="45" y="262" width="9" height="9"/><use href="#box" x="45" y="280" width="9" height="9"/><use href="#box" x="45" y="298" width="9" height="9"/><use href="#box" x="45" y="316" width="9" height="9"/><use href="#box" x="45" y="334" width="9" height="9"/><use href="#box" x="45" y="352" width="9" height="9"/><use href="#box" x="45" y="370" width="9" height="9"/><use href="#box" x="45" y="388" width="9" height="9"/><use href="#box" x="45" y="406" width="9" height="9"/><use href="#box" x="45" y="424" width="9" height="9"/><use href="#box" x="45" y="442" width="9" height="9"/><use href="#box" x="45" y="460" width="9" height="9"/><use href="#box" x="45" y="478" width="9" height="9"/>
<!-- row icons -->
<use href="#asm" x="41" y="78" width="17" height="17"/>
<use href="#folder" x="60" y="95" width="17" height="17"/><circle cx="68.500" cy="105" r="4" fill="#fff" stroke="#334"/><path d="M68.500 105l2-2" stroke="#c02020"/>
<use href="#folder" x="60" y="113" width="17" height="17"/><text x="64.500" y="127" style="font-family:'Liberation Serif',serif;font-weight:700;font-size:11px;fill:#1a2a90">A</text>
<use href="#planeB" x="59" y="131" width="18" height="18"/>
<use href="#plane" x="59" y="149" width="18" height="18"/>
<use href="#plane" x="59" y="167" width="18" height="18"/>
<use href="#orig" x="60" y="185" width="17" height="17"/>
<use href="#part" x="60" y="203" width="17" height="17"/>
<use href="#screw" x="59" y="221" width="15" height="17"/><use href="#screw" x="59" y="239" width="15" height="17"/>
<use href="#part" x="60" y="257" width="17" height="17"/><use href="#part" x="60" y="275" width="17" height="17"/><use href="#part" x="60" y="293" width="17" height="17"/><use href="#part" x="60" y="311" width="17" height="17"/><use href="#part" x="60" y="329" width="17" height="17"/><use href="#part" x="60" y="347" width="17" height="17"/>
<use href="#screw" x="59" y="365" width="15" height="17"/><use href="#screw" x="59" y="383" width="15" height="17"/><use href="#screw" x="59" y="401" width="15" height="17"/><use href="#screw" x="59" y="419" width="15" height="17"/><use href="#screw" x="59" y="437" width="15" height="17"/><use href="#screw" x="59" y="455" width="15" height="17"/>
<use href="#mates" x="59" y="473" width="18" height="18"/>
<!-- row text -->
<g clip-path="url(#cTree)">
<text x="62" y="90" textLength="170">16-20 сборка&#160;&#160;(По умолчанию&lt;Со</text>
<text x="81" y="108">Датчики</text>
<text x="80" y="126">Примечания</text>
<text x="80.500" y="144">Спереди</text>
<text x="80.500" y="162">Сверху</text>
<text x="80.500" y="180">Справа</text>
<text x="80" y="198" textLength="82">Исходная точка</text>
<text x="81" y="216" textLength="151">(ф) 16-20 корпус&lt;1&gt; (По умол</text>
<text x="80" y="234" textLength="152">radial ball bearing_68_din&lt;1&gt; (</text>
<text x="80" y="252" textLength="152">radial ball bearing_68_din&lt;2&gt; (</text>
<text x="81.700" y="270" textLength="149">16-20 ось&lt;1&gt; (По умолчанию</text>
<text x="81.700" y="288" textLength="150">16-20 гайка&lt;1&gt; (По умолчани</text>
<text x="80.700" y="306" textLength="151">ballscrew 2005&lt;1&gt; (Default&lt;&lt;</text>
<text x="81" y="324" textLength="151">20 шкив 37 зубов&lt;1&gt; (По умо</text>
<text x="81" y="342" textLength="150">20 диск&lt;1&gt; (Default&lt;&lt;Defaul</text>
<text x="81" y="360" textLength="150">20 диск&lt;2&gt; (Default&lt;&lt;Defaul</text>
<text x="81" y="378" textLength="150">(-) socket head cap screw 4762</text>
<text x="81" y="396" textLength="150">(-) socket head cap screw 4762</text>
<text x="81" y="414" textLength="150">(-) socket head cap screw 4762</text>
<text x="81" y="432" textLength="150">(-) socket head cap screw 4762</text>
<text x="81" y="450" textLength="150">(-) socket head cap screw 4762</text>
<text x="81" y="468" textLength="150">(-) socket head cap screw 4762</text>
<text x="80.700" y="486">Сопряжения</text>
</g>
<rect x="41" y="492" width="190" height="2" fill="#3568a4"/>
<!-- col icons -->
<use href="#plane" x="236" y="131" width="18" height="18"/><use href="#plane" x="236" y="149" width="18" height="18"/><use href="#plane" x="236" y="167" width="18" height="18"/>
<use href="#orig" x="237" y="185" width="15" height="17"/>
<use href="#part" x="236" y="204" width="17" height="17"/><use href="#part" x="236" y="222" width="17" height="17"/><use href="#part" x="236" y="240" width="17" height="17"/><use href="#part" x="236" y="258" width="17" height="17"/><use href="#part" x="236" y="276" width="17" height="17"/><use href="#part" x="236" y="294" width="17" height="17"/><use href="#part" x="236" y="312" width="17" height="17"/><use href="#part" x="236" y="330" width="17" height="17"/><use href="#part" x="236" y="348" width="17" height="17"/><use href="#part" x="236" y="366" width="17" height="17"/><use href="#part" x="236" y="384" width="17" height="17"/><use href="#part" x="236" y="402" width="17" height="17"/><use href="#part" x="236" y="420" width="17" height="17"/><use href="#part" x="236" y="438" width="17" height="17"/><use href="#part" x="236" y="456" width="17" height="17"/>
<use href="#cube" x="257" y="204" width="16" height="17"/><use href="#cube" x="257" y="222" width="16" height="17"/><use href="#cube" x="257" y="240" width="16" height="17"/><use href="#cube" x="257" y="258" width="16" height="17"/><use href="#cube" x="257" y="276" width="16" height="17"/><use href="#cube" x="257" y="294" width="16" height="17"/><use href="#cube" x="257" y="312" width="16" height="17"/><use href="#cube" x="257" y="330" width="16" height="17"/><use href="#cube" x="257" y="348" width="16" height="17"/><use href="#cube" x="257" y="366" width="16" height="17"/><use href="#cube" x="257" y="384" width="16" height="17"/><use href="#cube" x="257" y="402" width="16" height="17"/><use href="#cube" x="257" y="420" width="16" height="17"/><use href="#cube" x="257" y="438" width="16" height="17"/><use href="#cube" x="257" y="456" width="16" height="17"/>
<use href="#tri" x="278" y="205" width="15" height="15"/><use href="#tri" x="278" y="223" width="15" height="15"/><use href="#tri" x="278" y="241" width="15" height="15"/>
<rect x="278" y="259" width="15" height="15" fill="#f020d8" stroke="#111"/><use href="#tri" x="278" y="259" width="15" height="15"/>
<use href="#tri" x="278" y="277" width="15" height="15"/>
<rect x="278" y="295" width="15" height="15" fill="#f4ec90" stroke="#111"/><use href="#tri" x="278" y="295" width="15" height="15"/>
<use href="#tri" x="278" y="313" width="15" height="15"/>
<rect x="278" y="331" width="15" height="15" fill="#5fe87a" stroke="#111"/><use href="#tri" x="278" y="331" width="15" height="15"/>
<rect x="278" y="349" width="15" height="15" fill="#5fe87a" stroke="#111"/><use href="#tri" x="278" y="349" width="15" height="15"/>
<use href="#tri" x="278" y="367" width="15" height="15"/><use href="#tri" x="278" y="385" width="15" height="15"/><use href="#tri" x="278" y="403" width="15" height="15"/><use href="#tri" x="278" y="421" width="15" height="15"/><use href="#tri" x="278" y="439" width="15" height="15"/><use href="#tri" x="278" y="457" width="15" height="15"/>
<!-- splitter -->
<path d="M318 493h6l2 2v25h-8z" fill="#e0e4ec" stroke="#9a9eb0"/>
<path d="M324 498l-4 2 4 2zM324 506l-4 2 4 2zM324 514l-4 2 4 2z" fill="#4a5068"/>
<!-- scrollbar -->
<rect x="41" y="973" width="190" height="14" fill="#e6e4dc"/>
<rect x="112" y="973" width="104" height="14" fill="#e4e2dc"/>
<rect x="41" y="973" width="13" height="14" fill="#e0ded6"/>
<path d="M50 976v8l-5-4z" fill="#111"/>
<rect x="55" y="973" width="57" height="14" fill="#d4d0c8" stroke="#f0f0f0"/><path d="M112 973v14" stroke="#666"/>
<rect x="216" y="973" width="15" height="14" fill="#e0ded6"/><path d="M216 973v14" stroke="#777"/>
<path d="M221 976v8l5-4z" fill="#111"/>
<path d="M41 987.500H317" stroke="#9a9eb0"/>

<!-- tab bar -->
<rect x="41" y="989" width="1597" height="15" fill="#e0e4ec"/>
<path d="M318 989.500H1638" stroke="#111"/>
<rect x="43" y="990" width="65" height="13" fill="#adb1c4" stroke="#8a8ea0"/>
<path d="M58.500 990v13M74.500 990v13M91.500 990v13" stroke="#8a8ea0"/>
<path d="M47 993v7M54 993l-5 3.500 5 3.500zM70 993l-5 3.500 5 3.500zM80 993l5 3.500-5 3.500zM96 993l5 3.500-5 3.500zM103 993v7" stroke="#7b7f92" fill="#7b7f92"/>
<rect x="110" y="989" width="67.500" height="14.500" fill="#dfe3ee" stroke="#555a70"/>
<rect x="177.500" y="990" width="178.500" height="13.500" fill="#b7bcd0" stroke="#555a70"/>
<text x="120" y="1000" textLength="47" style="font-size:12px;font-weight:700;fill:#1d1d2a">Модель</text>
<text x="187.500" y="1000" textLength="151" style="font-size:12px;fill:#2e2e42">Исследование движения 1</text>

<!-- Right toolbar -->
<rect x="1638" y="29" width="42" height="975" fill="url(#gR)"/>
<path d="M1640 34H1678" stroke="#777" stroke-dasharray="1.500 1.500"/>
<g stroke="#7c8096"><path d="M1641 93H1677M1641 376.500H1677M1641 546.500H1677M1641 600H1677M1641 631H1677"/></g>
<path d="M1644 60V47h8M1644 60h6" fill="none" stroke="#1a237e" stroke-width="2"/><path d="M1648 58l9-7 3 2-9 7z" fill="#f5cb1c" stroke="#8a6a10"/><use href="#dd" x="1667" y="55" width="5" height="3"/>
<path d="M1645 78l7-6 8 6-7 6z" fill="#fff" stroke="#1a237e" stroke-width="1.800"/><path d="M1650 76l4 4" stroke="#f5cb1c" stroke-width="2"/><use href="#dd" x="1667" y="77" width="5" height="3"/>
<use href="#rLine" x="1643" y="100" width="18" height="18"/><use href="#dd" x="1667" y="108" width="5" height="3"/>
<use href="#rRect" x="1643" y="121" width="18" height="18"/><use href="#dd" x="1667" y="129" width="5" height="3"/>
<use href="#rSlot" x="1643" y="144" width="18" height="18"/><use href="#dd" x="1667" y="152" width="5" height="3"/>
<use href="#rCirc" x="1643" y="167" width="18" height="18"/><use href="#dd" x="1667" y="175" width="5" height="3"/>
<use href="#rArc" x="1643" y="191" width="18" height="18"/><use href="#dd" x="1667" y="199" width="5" height="3"/>
<use href="#rSpl" x="1643" y="214" width="18" height="18"/><use href="#dd" x="1667" y="222" width="5" height="3"/>
<use href="#rEll" x="1643" y="237" width="18" height="18"/><use href="#dd" x="1667" y="245" width="5" height="3"/>
<use href="#rFil" x="1643" y="262" width="18" height="18"/><path d="M1667 269h5l-2.500 3z" fill="#999"/>
<use href="#rHex" x="1644" y="283" width="16" height="16"/>
<use href="#rPt" x="1644" y="307" width="16" height="16"/>
<use href="#rCon" x="1643" y="329" width="18" height="18"/>
<use href="#rTxt" x="1643" y="352" width="18" height="18"/>
<use href="#rTrim" x="1643" y="384" width="18" height="18"/><path d="M1667 391h5l-2.500 3z" fill="#999"/>
<use href="#rBox" x="1643" y="407" width="18" height="18"/><use href="#dd" x="1667" y="415" width="5" height="3"/>
<use href="#rCurve" x="1643" y="429" width="18" height="18"/>
<use href="#rOff" x="1643" y="451" width="18" height="18"/>
<use href="#rWarn" x="1643" y="476" width="18" height="18"/>
<use href="#rGrid" x="1643" y="499" width="18" height="18"/><path d="M1667 507h5l-2.500 3z" fill="#999"/>
<use href="#rMove" x="1643" y="521" width="18" height="18"/><path d="M1667 529h5l-2.500 3z" fill="#999"/>
<use href="#rDim" x="1643" y="553" width="18" height="18"/><path d="M1667 561h5l-2.500 3z" fill="#999"/>
<use href="#rRel" x="1643" y="575" width="18" height="18"/>
<use href="#rTgt" x="1643" y="606" width="18" height="18"/><use href="#dd" x="1667" y="614" width="5" height="3"/>
<use href="#rBolt" x="1643" y="636" width="18" height="18"/>
<use href="#rScl" x="1643" y="660" width="18" height="18"/>
<use href="#rOff" x="1643" y="683" width="18" height="18"/>

<!-- Task pane tabs -->
<g fill="#b6bacb" stroke="#80849a">
<path d="M1638 89.500h-20q-3 0-3 3v18q0 2 3 2h20z"/>
<path d="M1638 113.500h-20q-3 0-3 3v18q0 2 3 2h20z"/>
<path d="M1638 137.500h-20q-3 0-3 3v18q0 2 3 2h20z"/>
<path d="M1638 161.500h-20q-3 0-3 3v18q0 2 3 2h20z"/>
<path d="M1638 185.500h-20q-3 0-3 3v18q0 2 3 2h20z" fill="#dfe2ec"/>
<path d="M1638 209.500h-20q-3 0-3 3v18q0 2 3 2h20z"/>
</g>
<use href="#home" x="1618" y="92" width="18" height="18"/>
<use href="#lib" x="1618" y="116" width="18" height="18"/>
<use href="#fold" x="1618" y="140" width="18" height="18"/>
<use href="#vpal" x="1618" y="163" width="18" height="19"/>
<use href="#ball" x="1618" y="188" width="18" height="18"/>
<use href="#cust" x="1618" y="212" width="18" height="18"/>

<!-- Status bar -->
<rect x="0" y="1004" width="1680" height="18" fill="#d4d0c8"/>
<path d="M0 1004.500H1680" stroke="#8a8a88"/><path d="M0 1005.500H1680" stroke="#f4f4f0"/>
<text x="2" y="1017" textLength="269" style="font-size:11.500px;fill:#222">Выберите объекты, чтобы изменить их внешний вид</text>
<rect x="1214" y="1006" width="11" height="16" fill="#b8bcc8"/>
<rect x="1225.500" y="1006.500" width="109" height="15.500" fill="#d4d0c8" stroke="#fff"/>
<text x="1226" y="1017" textLength="101" style="fill:#222">Недоопределенный</text>
<rect x="1337" y="1006" width="5" height="16" fill="#b8bcc8"/>
<rect x="1343.500" y="1006.500" width="126" height="15.500" fill="#d4d0c8" stroke="#fff"/>
<text x="1346" y="1017" textLength="117" style="fill:#222">Редактируется Сборка</text>
<path d="M1473 1006h5v16h-5zM1481 1006h5v16h-5zM1489 1006h4v16h-4zM1497 1006h4v16h-4zM1505 1006h4v16h-4z" fill="#b8bcc8"/>
<text x="1520" y="1017" textLength="29" style="fill:#222">ММГС</text>
<path d="M1572 1016h6l-3-3z" fill="#222"/>
<rect x="1596.500" y="1007.500" width="12" height="13" fill="#f7f7f0" stroke="#1a5a8a"/>
<text x="1599" y="1018" style="font-size:12px;font-weight:700;fill:#1a9a30">?</text>
<path d="M1617 1006h4v16h-4zM1625 1006h4v16h-4zM1633 1006h4v16h-4zM1641 1006h4v16h-4zM1649 1006h4v16h-4z" fill="#b8bcc8"/>
<path d="M1659 1016l9-9h5v5l-9 9h-3z" fill="#f0c840" stroke="#8a6a10"/>
</svg>
</body></html>
